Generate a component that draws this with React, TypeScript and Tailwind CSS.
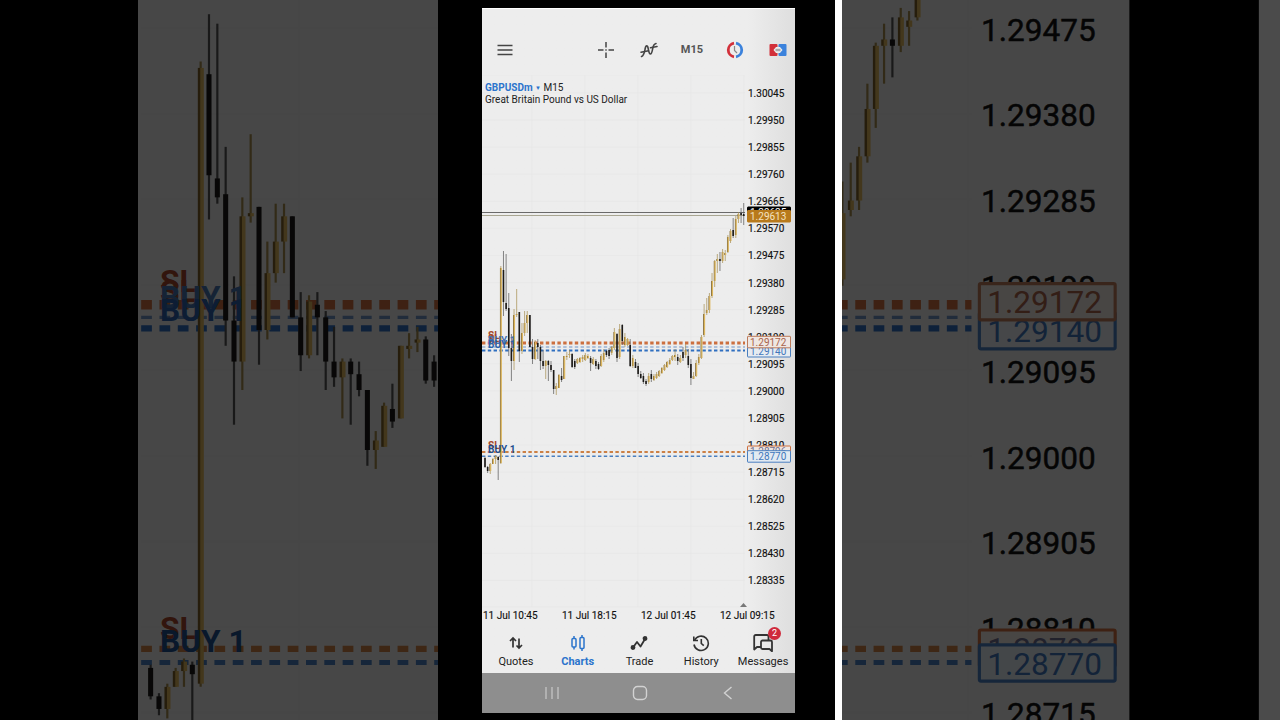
import React from 'react';

type Candle = {
  up: boolean;
  high: number;
  top: number;
  bottom: number;
  low: number;
};

const WIDTH = 313;
const HEIGHT = 547;
const AXIS_X = 263;

// u = up, d = down, then high, body top, body bottom, low in chart units
const CANDLE_DATA = `
d 382 383 392 393|d 391 392 396 398|u 388 389 396 399|u 383 384 389 389|u 380 381 384 389|d 381 382 385 405
u 191 193 388 389|d 176 195 227 241|d 179 228 234 236|d 218 233 273 281|d 259 273 286 306|u 234 240 286 295
u 214 239 240 242|d 237 237 276 287|u 248 258 276 279|u 236 248 258 261|u 236 240 248 258|d 240 240 272 272
d 264 272 284 289|u 265 267 284 285|d 264 268 272 284|d 270 272 286 295|d 275 286 291 294|u 285 286 291 304
d 285 286 290 306|d 286 290 295 297|d 295 295 314 319|u 308 311 314 320|u 299 300 313 313|d 293 301 305 307
u 281 281 304 304|u 277 281 282 285|u 275 279 280 283|d 278 279 292 293|d 284 286 292 294|u 283 284 288 289
u 282 283 287 288|u 280 282 284 287|u 278 280 285 286|u 279 281 283 284|d 281 283 288 296|u 282 284 289 290
d 284 286 291 294|d 287 289 294 295|u 279 281 291 292|u 274 278 285 287|d 275 276 280 282|d 273 275 281 284
u 271 272 278 280|u 253 257 273 275|d 258 259 283 287|u 249 254 282 284|d 249 250 266 270|u 258 262 270 272
u 263 264 270 271|d 264 270 291 292|u 280 283 291 293|d 284 287 293 293|d 288 291 299 302|d 296 299 303 304
d 298 301 307 309|d 304 306 309 311|u 298 301 307 309|d 295 299 304 307|u 299 301 305 306|u 297 299 303 304
u 295 296 301 302|u 292 293 298 299|u 289 290 295 296|u 286 287 292 293|u 283 285 289 290|u 280 281 285 286
u 274 280 282 286|d 279 282 286 290|u 280 283 287 288|d 272 277 283 286|u 269 275 280 283|d 274 281 290 293
d 284 289 303 310|u 297 301 304 304|u 285 288 301 302|u 279 282 288 290|u 260 262 283 284|u 229 239 260 262
u 223 235 238 240|u 218 221 235 238|u 198 206 221 223|u 185 186 206 212|u 179 184 186 198|d 177 184 186 196
u 174 177 186 188|u 175 178 180 186|u 160 162 177 178|u 154 156 166 168|d 143 155 161 163|u 141 144 160 163
u 137 139 144 148|d 133 138 140 148|d 128 139 141 150`;

const CANDLES: Candle[] = CANDLE_DATA.trim()
  .split(/[|\n]/)
  .map((row) => {
    const [kind, ...values] = row.trim().split(' ');
    const [high, top, bottom, low] = values.map(Number);
    return { up: kind === 'u', high, top, bottom, low };
  });

const PRICES = Array.from({ length: 19 }, (_, i) => ({
  label: (1.30045 - i * 0.00095).toFixed(5),
  y: 18 + i * 27.08,
}));

const DATES = ['11 Jul 10:45', '11 Jul 18:15', '12 Jul 01:45', '12 Jul 09:15'];

const LEVELS = [
  { y: 268, width: 3, color: '#cc6f3f' },
  { y: 272, width: 1, color: '#6f93c4' },
  { y: 275.5, width: 2, color: '#2f6fc0' },
  { y: 377, width: 2, color: '#cc8045' },
  { y: 381.3, width: 1.6, color: '#4a7fbf' },
];

const TAGS = [
  { y: 132, price: '1.29625', fill: '#000000', border: '#000000', color: '#ffffff' },
  { y: 135.5, price: '1.29613', fill: '#b87a1c', border: '#b87a1c', color: '#f5e3c0' },
  { y: 270.5, price: '1.29140', fill: '#e6ebf1', border: '#4a7fbf', color: '#3f76bb' },
  { y: 261.3, price: '1.29172', fill: '#efe7e2', border: '#bd7b5b', color: '#a8634b' },
  { y: 371, price: '1.28796', fill: '#efe7e2', border: '#cc6f3f', color: '#6f6f8f' },
  { y: 375.7, price: '1.28770', fill: '#e2eaf2', border: '#4a7fbf', color: '#3f76bb' },
];

const Plot: React.FC = () => (
  <g>
    <g stroke="#e6e6e6" strokeWidth={0.6}>
      {PRICES.map((price) => (
        <line key={price.label} x1={0} x2={AXIS_X} y1={price.y} y2={price.y} />
      ))}
      {[50, 103, 156, 209, 262].map((x) => (
        <line key={x} x1={x} x2={x} y1={0} y2={532} />
      ))}
      <line x1={0} x2={AXIS_X} y1={532} y2={532} />
      <line x1={0} x2={AXIS_X} y1={0} y2={0} />
    </g>

    {LEVELS.map((level) => (
      <line
        key={level.y}
        x1={0}
        x2={AXIS_X}
        y1={level.y}
        y2={level.y}
        stroke={level.color}
        strokeWidth={level.width}
        strokeDasharray="3.4 2.4"
      />
    ))}
    <line x1={0} x2={AXIS_X} y1={137.5} y2={137.5} stroke="#6a6a6a" />
    <line x1={0} x2={AXIS_X} y1={140.5} y2={140.5} stroke="#a9a692" />

    {CANDLES.map((c, i) => {
      const x = 3 + i * 2.64;
      return (
        <g key={i}>
          <line x1={x} x2={x} y1={c.high} y2={c.low} stroke={c.up ? '#a58d4e' : '#555555'} strokeWidth={0.7} />
          {c.up ? (
            <>
              <rect x={x - 0.9} y={c.top} width={0.8} height={c.bottom - c.top} fill="#7d6229" />
              <rect x={x - 0.1} y={c.top} width={1.1} height={c.bottom - c.top} fill="#deb75c" />
            </>
          ) : (
            <rect x={x - 0.8} y={c.top} width={1.6} height={c.bottom - c.top} fill="#1c1a18" />
          )}
        </g>
      );
    })}
  </g>
);

const OrderLabels: React.FC = () => (
  <g fontSize={10} fontWeight={700}>
    <text x={6} y={264} fill="#a5482c">SL</text>
    <text x={6} y={267} fill="#a5482c">SL</text>
    <text x={6} y={269} fill="#4673b0">BUY 1</text>
    <text x={6} y={273} fill="#2c62ab">BUY 1</text>
    <text x={6} y={374} fill="#a5482c">SL</text>
    <text x={6} y={378} fill="#1f4f8f">BUY 1</text>
  </g>
);

const PriceAxis: React.FC<{ from?: number; to?: number }> = ({ from = 0, to = HEIGHT }) => (
  <g fontSize={10}>
    {PRICES.filter((price) => price.y > from && price.y < to).map((price) => (
      <text key={price.label} x={266} y={price.y + 4} fill="#111" stroke="#111" strokeWidth={0.15}>
        {price.label}
      </text>
    ))}
    {TAGS.filter((tag) => tag.y > from && tag.y < to).map((tag) => (
      <g key={tag.price}>
        <rect x={265.5} y={tag.y} width={43} height={11.5} rx={0.5} fill={tag.fill} stroke={tag.border} />
        <text x={268} y={tag.y + 9.4} fill={tag.color}>{tag.price}</text>
      </g>
    ))}
  </g>
);

const DateAxis: React.FC = () => (
  <g fontSize={10} fill="#111" stroke="#111" strokeWidth={0.15}>
    {DATES.map((date, i) => (
      <text key={date} x={1 + i * 79} y={544}>{date}</text>
    ))}
    <path d="M258 532l3.5-4 3.5 4z" fill="#777" stroke="none" />
  </g>
);

// Enlarged, dimmed slice of the chart shown beside the phone
const Backdrop: React.FC<{ side: 'left' | 'right' }> = ({ side }) => (
  <div className="flex-1 min-w-0 h-full bg-black overflow-hidden" aria-hidden="true">
    <svg
      className="w-full h-full opacity-30"
      viewBox={side === 'left' ? '-45 171.5 139 228' : '222 171.5 139 228'}
      preserveAspectRatio={side === 'left' ? 'xMaxYMid slice' : 'xMinYMid slice'}
    >
      <rect x={-1} width={WIDTH + 1} height={HEIGHT} fill="#ebebeb" />
      <rect x={354} width={7} height={HEIGHT} fill="#f8f8f8" />
      <Plot />
      {side === 'left' ? <OrderLabels /> : <PriceAxis from={172} to={400} />}
    </svg>
  </div>
);

const MenuIcon = () => (
  <svg viewBox="0 0 16 16" className="w-4 h-4" stroke="#444" strokeWidth="1.5">
    <path d="M0.5 3.5h15M0.5 8h15M0.5 12.5h15" />
  </svg>
);

const CrosshairIcon = () => (
  <svg viewBox="0 0 18 18" className="w-[18px] h-[18px]" stroke="#444" strokeWidth="1.5">
    <path d="M9 1v5.5M9 11.5V17M1 9h5.5M11.5 9H17M8.3 9h1.4" />
  </svg>
);

const IndicatorIcon = () => (
  <svg viewBox="0 0 18 18" className="w-[18px] h-[18px]" fill="none" stroke="#444" strokeWidth="1.6" strokeLinecap="round" strokeLinejoin="round">
    <path d="M1.5 15.5C4 14.5 4.500 11 5.200 7.500s2.300-3.500 3 0 .8 5.500 2.200 5.500 1.800-2.500 2.300-5.500 1.300-4.500 3.300-5" />
    <path d="M1 11.200l7.500-1.400M10.500 6.800l6.500-1.300" />
  </svg>
);

const ClockIcon = () => (
  <svg viewBox="0 0 18 18" className="w-[18px] h-[18px]" fill="none">
    <path d="M8 2.200a6.900 6.900 0 0 0 0 13.600" stroke="#d2303a" strokeWidth="2.800" />
    <path d="M10 2.200a6.900 6.900 0 0 1 0 13.600" stroke="#3b82dc" strokeWidth="2.800" />
    <path d="M8.500 5v4.500l2.500 2.500" stroke="#888" strokeWidth="1.200" />
  </svg>
);

const OrderIcon = () => (
  <svg viewBox="0 0 18 14" className="w-[18px] h-[14px]">
    <rect x="0.5" y="1" width="8" height="12" rx="1" fill="#d2303a" />
    <rect x="9.5" y="1" width="8" height="12" rx="1" fill="#3b82dc" />
    <path d="M4.500 7l2.500-3h4l2.500 3-2.500 3h-4z" fill="#eee" />
    <path d="M6.500 5.800h5v2.400h-5z" fill="#aaa" />
  </svg>
);

const QuotesIcon = () => (
  <svg viewBox="0 0 18 18" className="w-[18px] h-[18px]" fill="none" stroke="#333" strokeWidth="1.7">
    <path d="M6 13.500V4M3 7l3-3 3 3M12 4.500V14M9.500 11.500L12 14l3-3" />
  </svg>
);

const CandlesIcon = () => (
  <svg viewBox="0 0 18 18" className="w-[18px] h-[18px]" fill="none" stroke="#2b74cc" strokeWidth="1.500">
    <path d="M5 2v2.500M5 13v2.500M13 1v2.500M13 14.500V17" />
    <rect x="3" y="4.500" width="4" height="8.500" rx="1" />
    <rect x="11" y="3.500" width="4" height="11" rx="1" />
  </svg>
);

const TradeIcon = () => (
  <svg viewBox="0 0 18 18" className="w-[18px] h-[18px]" fill="none" stroke="#333" strokeWidth="1.800" strokeLinejoin="round">
    <path d="M3 13.500l4-5.500 3.500 4.500L15 5" />
    <circle cx="3" cy="13.500" r="1.500" fill="#333" />
    <circle cx="15" cy="4.500" r="1.500" fill="#333" />
  </svg>
);

const HistoryIcon = () => (
  <svg viewBox="0 0 18 18" className="w-[18px] h-[18px]" fill="none" stroke="#333" strokeWidth="1.600">
    <path d="M2.600 6.200A7.200 7.200 0 1 1 2 10.500" />
    <path d="M1.800 2.500v4h4.200M9.300 5v4.500l2.500 2.200" />
  </svg>
);

const MessagesIcon = () => (
  <svg viewBox="0 0 20 18" className="w-5 h-[18px]" fill="none" stroke="#333" strokeWidth="1.800" strokeLinejoin="round">
    <path d="M8 13H4l-2.800 2.500V2.500A1.500 1.500 0 0 1 2.700 1h11.300a1.500 1.500 0 0 1 1.500 1.500V6" />
    <path d="M9.500 6.500h8A1.500 1.500 0 0 1 19 8v9.200l-2.500-2.200h-7A1.500 1.500 0 0 1 8 13.500V8a1.500 1.500 0 0 1 1.500-1.500z" />
  </svg>
);

const tools = [
  { label: 'Crosshair', content: <CrosshairIcon /> },
  { label: 'Indicators', content: <IndicatorIcon /> },
  { label: 'Timeframe M15', content: <span className="text-[11px] font-bold text-[#555]">M15</span> },
  { label: 'Sessions', content: <ClockIcon /> },
  { label: 'New order', content: <OrderIcon /> },
];

const tabs = [
  { label: 'Quotes', icon: <QuotesIcon /> },
  { label: 'Charts', icon: <CandlesIcon />, active: true },
  { label: 'Trade', icon: <TradeIcon /> },
  { label: 'History', icon: <HistoryIcon /> },
  { label: 'Messages', icon: <MessagesIcon />, badge: 2 },
];

const Phone: React.FC = () => (
  <div className="h-full flex flex-col bg-linear-to-r from-[#ededed] from-85% to-[#dedede]">
    <header className="h-[67px] shrink-0 pt-4 pl-[7px] pr-px flex items-center justify-between border-t border-white">
      <button aria-label="Menu" className="w-8 h-8 flex items-center justify-center">
        <MenuIcon />
      </button>
      <div className="flex gap-[11px]">
        {tools.map((tool) => (
          <button key={tool.label} aria-label={tool.label} className="w-8 h-8 flex items-center justify-center">
            {tool.content}
          </button>
        ))}
      </div>
    </header>

    <main className="relative flex-1 min-h-0">
      <svg
        className="w-full h-full font-[Roboto,sans-serif]"
        viewBox={`0 0 ${WIDTH} ${HEIGHT}`}
        role="img"
        aria-label="GBPUSDm M15 chart"
      >
        <Plot />
        <OrderLabels />
        <PriceAxis />
        <DateAxis />
      </svg>
      <div className="absolute top-[7px] left-[3px] text-[10px] leading-[12px] text-[#222]">
        <div>
          <button className="font-bold text-[#2b74cc]">
            GBPUSDm <span className="text-[6px] align-middle">▼</span>
          </button>{' '}
          M15
        </div>
        <p>Great Britain Pound vs US Dollar</p>
      </div>
    </main>

    <nav className="h-[51px] shrink-0 pl-[3px] pr-px pt-3 grid grid-cols-5">
      {tabs.map((tab) => (
        <a
          key={tab.label}
          href="#"
          className={`flex flex-col items-center gap-[3px] text-[11px] leading-[13px] ${
            tab.active ? 'font-bold text-[#2b74cc]' : 'text-[#222]'
          }`}
        >
          <span className="relative">
            {tab.icon}
            {tab.badge && (
              <span className="absolute -top-[7px] -right-[8px] w-[13px] h-[13px] rounded-full bg-[#cf2a3c] text-white text-[9px] leading-[13px] text-center">
                {tab.badge}
              </span>
            )}
          </span>
          {tab.label}
        </a>
      ))}
    </nav>

    <footer className="h-10 shrink-0 pb-px pl-[26px] pr-[23px] grid grid-cols-3 place-items-center bg-[#8e8e8e]">
      <button aria-label="Recent apps">
        <svg viewBox="0 0 16 16" className="w-4 h-4" stroke="#c9c9c9" strokeWidth="1.200">
          <path d="M2 2v12M8 2v12M14 2v12" />
        </svg>
      </button>
      <button aria-label="Home">
        <svg viewBox="0 0 16 16" className="w-4 h-4" fill="none" stroke="#d2d2d2" strokeWidth="1.400">
          <rect x="1.500" y="1.500" width="13" height="13" rx="4" />
        </svg>
      </button>
      <button aria-label="Back">
        <svg viewBox="0 0 16 16" className="w-4 h-4" fill="none" stroke="#d2d2d2" strokeWidth="1.400">
          <path d="M11.500 2L4.500 8l7 6" />
        </svg>
      </button>
    </footer>
  </div>
);

const App: React.FC = () => {
  return (
    <div className="h-screen flex bg-black overflow-hidden font-[Roboto,sans-serif]">
      <Backdrop side="left" />
      <section className="w-[404px] shrink-0 flex">
        <div className="flex-1 pl-11 pr-10 pt-2 pb-[7px]">
          <Phone />
        </div>
        <div className="w-[7px] bg-white"></div>
      </section>
      <Backdrop side="right" />
    </div>
  );
};

export default App;
